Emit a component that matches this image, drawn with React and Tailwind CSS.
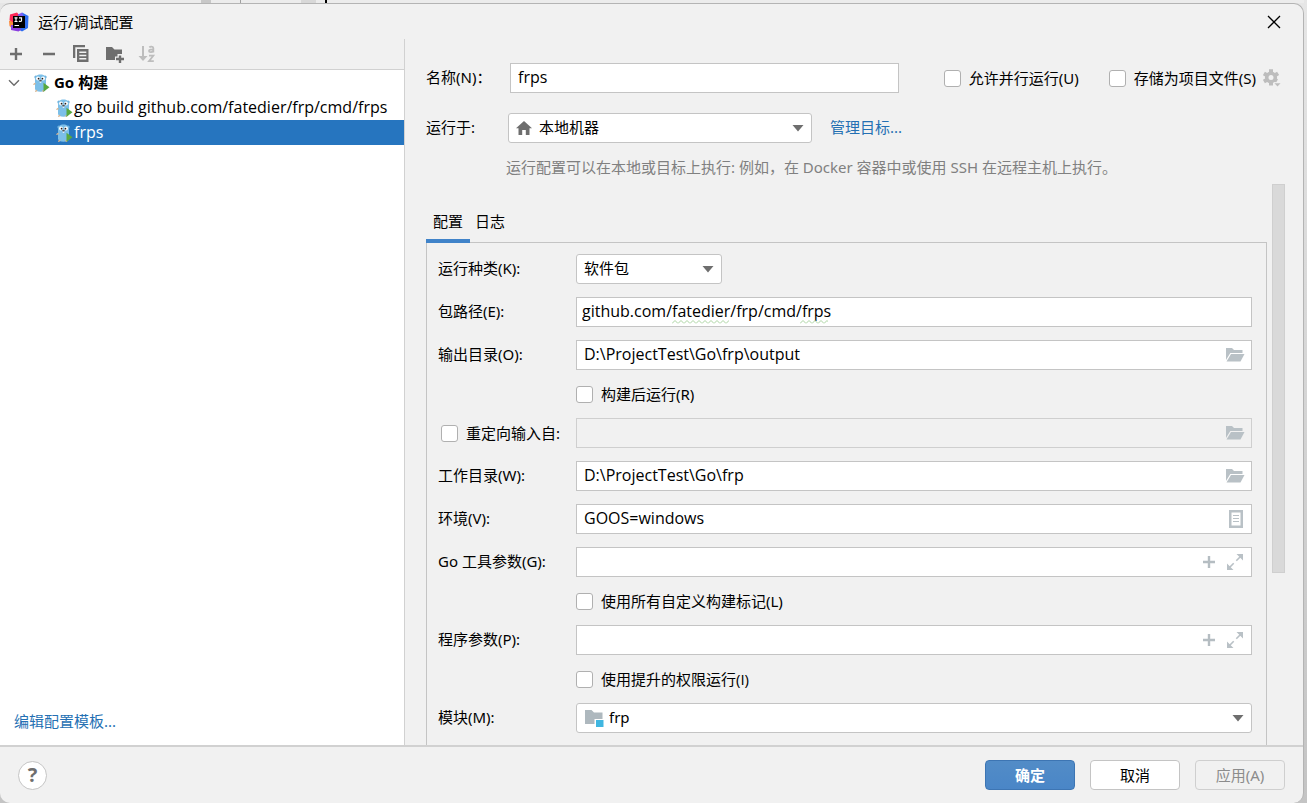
import React, { useState } from 'react';

const PlusIcon = ({ className }) => (
    <svg className={className} width="14" height="14" viewBox="0 0 14 14" fill="currentColor" aria-hidden="true">
        <path d="M5.8 1h2.4v4.8H13v2.4H8.200V13H5.800V8.200H1V5.800h4.800z" />
    </svg>
);

const MinusIcon = () => (
    <svg width="14" height="14" viewBox="0 0 14 14" fill="currentColor" aria-hidden="true">
        <path d="M1 5.800h12v2.400H1z" />
    </svg>
);

const CopyIcon = () => (
    <svg width="18" height="18" viewBox="0 0 18 18" fill="currentColor" aria-hidden="true">
        <path d="M1 0h12v2.300H3.300V13H1z" />
        <path fillRule="evenodd" d="M5 4h11.500v13H5zM7.300 6.500v1.500h7V6.500zM7.300 9.700v1.500h7V9.700zM7.300 13v1.500h7V13z" />
    </svg>
);

const NewFolderIcon = () => (
    <svg width="20" height="18" viewBox="0 0 20 18" fill="currentColor" aria-hidden="true">
        <path d="M1 2h6l2.500 2.500H17V9h-4.500v2.500H10V15H1z" />
        <path d="M13.800 10.500h2.400v2.300h2.800v2.400h-2.800V18h-2.400v-2.800H11v-2.400h2.800z" />
    </svg>
);

const SortIcon = () => (
    <svg width="18" height="18" viewBox="0 0 18 18" fill="none" stroke="currentColor" aria-hidden="true">
        <path strokeWidth="2" d="M5 1v12" />
        <path fill="currentColor" stroke="none" d="M.5 11h9L5 16z" />
        <path strokeWidth="1.800" d="M11.300 2.300c1-.9 4-1 4 .7V7.500M15.300 4.500c-2 0-4.300.1-4.300 1.500 0 1.500 3.300 1.500 4.300 0M11 10.700h4.300L11 16.200h4.800" />
    </svg>
);

const IdeaLogo = () => (
    <svg width="20" height="20" viewBox="0 0 20 20" aria-hidden="true">
        <path fill="#fc8a3b" d="M0 9 5 6v9l-2 1.500L.5 14z" />
        <path fill="#fe2857" d="M1 2.500 8 .5 12 5 5 11 .5 8z" />
        <path fill="#7b5cf2" d="M9 2.500 13 .5l4 4-7 4z" />
        <path fill="#2f6ff0" d="M13 .5 19.500 4 19 16l-6 3.500L9 17l6-12z" />
        <path fill="#8a3fe0" d="M2 13h8l2 5-2.500 1.500L2 18z" />
        <path fill="#000" d="M4 4h12v12H4z" />
        <path fill="none" stroke="#fff" strokeWidth="1.200" d="M5.500 5.800h3M7 5.800v3.700M5.500 9.500h3M10 5.800h2.500V8.500c0 .8-.6 1-1.200 1s-1-.3-1.300-.7M5.500 13.500h4.500" />
    </svg>
);

const GopherIcon = () => (
    <svg width="18" height="18" viewBox="0 0 18 18" aria-hidden="true" className="shrink-0">
        <circle cx="2.800" cy="3" r="1.500" fill="#6fb1dc" />
        <circle cx="12.200" cy="3" r="1.500" fill="#6fb1dc" />
        <path fill="#7cbfe8" d="M2 6C2 2.300 4 .5 7.500.5S13 2.300 13 6v8.500c0 2.300-2 3.200-5.500 3.200S2 16.800 2 14.500z" />
        <circle cx="5" cy="4.500" r="1.900" fill="#fff" />
        <circle cx="10" cy="4.500" r="1.900" fill="#fff" />
        <circle cx="5.600" cy="4.700" r=".9" fill="#231f20" />
        <circle cx="9.400" cy="4.700" r=".9" fill="#231f20" />
        <path fill="#fff" d="M6.700 7.300h1.600v1.500H6.700z" />
        <ellipse cx="7.500" cy="6.700" rx="1.300" ry=".8" fill="#5a4a42" />
        <path stroke="#d9b590" strokeWidth="1.400" strokeLinecap="round" d="M1 10.300l1-.7M2.800 17.200l.8-.7M10.500 17.300l-.6-.5" />
        <path fill="#59a83e" d="M10.500 8.800v9l6-4.500z" />
    </svg>
);

const ChevronDown = () => (
    <svg width="12" height="8" viewBox="0 0 12 8" fill="none" stroke="#6e6e6e" strokeWidth="1.500" aria-hidden="true">
        <path d="M1 1.200 6 6.200 11 1.200" />
    </svg>
);

const HomeIcon = () => (
    <svg width="16" height="14" viewBox="0 0 16 14" fill="#6e6e6e" aria-hidden="true">
        <path d="M8 0l8 7.200h-2.500V14H9.800V9H6.200v5H2.500V7.200H0z" />
    </svg>
);

const ModuleIcon = () => (
    <svg width="20" height="18" viewBox="0 0 20 18" aria-hidden="true">
        <path fill="#aeb8be" d="M1 1h6.500L10 3.500h8.500V10h-8v5H1z" />
        <path fill="#40b6e0" d="M12 11h7.500v7H12z" />
    </svg>
);

const OpenFolderIcon = () => (
    <svg width="20" height="14" viewBox="0 0 20 14" fill="#b9c1c6" aria-hidden="true">
        <path d="M1 0h6l2 2h8.500v3H5.300L1 12z" />
        <path d="M6 6h13.500l-4 7.500H1.500z" />
    </svg>
);

const ListIcon = () => (
    <svg width="16" height="18" viewBox="0 0 16 18" fill="#b9c1c6" aria-hidden="true">
        <path fillRule="evenodd" d="M0 0h14v18H0zM2.500 2.500v13h9v-13z" />
        <path d="M4 5h6v1H4zM4 8h6v1H4zM4 11h6v1H4z" />
    </svg>
);

const ExpandIcon = () => (
    <svg width="18" height="16" viewBox="0 0 18 16" aria-hidden="true">
        <path fill="#b9c1c6" d="M9.500 0H16v6.500zM0 9.500V16h6.500z" />
        <path stroke="#b9c1c6" strokeWidth="1.600" d="M14 2 9.300 6.700M2 14l4.700-4.700" />
    </svg>
);

const GearIcon = () => (
    <svg width="18" height="18" viewBox="0 0 18 18" aria-hidden="true">
        <circle cx="8" cy="8.500" r="4.300" fill="none" stroke="#bdbdbd" strokeWidth="3.600" />
        <path stroke="#bdbdbd" strokeWidth="4" d="M8 .3v3.200M8 13.300v3.200M.9 4.400l2.700 1.600M12.200 10.900l1.800 1M.9 12.600l2.700-1.600M15.100 4.400L12.400 6" />
        <path fill="#f1f1f1" d="M10.500 13.300h8V18h-8z" />
        <path fill="#bdbdbd" d="M11.500 14.300h6l-3 3.300z" />
    </svg>
);

const Arrow = () => (
    <svg width="12" height="7" viewBox="0 0 12 7" fill="#6e6e6e" aria-hidden="true">
        <path d="M.5 0h11L6 6.500z" />
    </svg>
);

const Wave = ({ id }) => (
    <svg width="100%" height="4" aria-hidden="true">
        <defs>
            <pattern id={id} width="6" height="4" patternUnits="userSpaceOnUse">
                <path d="M0 3.500 3 .5 6 3.500" fill="none" stroke="#a9d3a0" />
            </pattern>
        </defs>
        <rect width="100%" height="4" fill={`url(#${id})`} />
    </svg>
);

const Check = ({ children }) => (
    <label className="flex items-center gap-2 whitespace-nowrap">
        <input type="checkbox" className="size-[17px] shrink-0 appearance-none rounded-[3px] border border-[#b0b0b0] bg-white checked:bg-[#4083c9]" />
        {children}
    </label>
);

const Dropdown = ({ id, value, icon, className, selectClass }) => (
    <div className={`relative h-[30px] ${className}`}>
        <select id={id} className={`h-full w-full appearance-none rounded-[3px] border border-[#c4c4c4] bg-white pb-0.5 ${selectClass}`}>
            <option>{value}</option>
        </select>
        {icon && <span className="pointer-events-none absolute inset-y-0 left-2 flex items-center">{icon}</span>}
        <span className="pointer-events-none absolute inset-y-0 right-2 flex items-center"><Arrow /></span>
    </div>
);

const Row = ({ id, label, children }) => (
    <div className="flex h-[30px] items-center">
        <label htmlFor={id} className="w-[138px] shrink-0 pb-0.5">{label}</label>
        {children}
    </div>
);

const Field = ({ id, value = '', disabled, buttons, pad = 'px-[7px]', children }) => (
    <div className="relative h-[30px] flex-1">
        <input
            id={id}
            type="text"
            defaultValue={value}
            disabled={disabled}
            className={`h-full w-full border border-[#c4c4c4] bg-white pb-0.5 font-['Open_Sans','Noto_Sans_CJK_SC',sans-serif] text-base disabled:border-[#cfcfcf] disabled:bg-[#f1f1f1] ${pad}`}
        />
        {children}
        {buttons && <span className="absolute inset-y-0 right-[7px] flex items-center gap-[11px] text-[#b5bdc2]">{buttons}</span>}
    </div>
);

const IconButton = ({ label, disabled, children }) => (
    <button type="button" aria-label={label} disabled={disabled} className="flex items-center">{children}</button>
);

const browse = <IconButton label="浏览"><OpenFolderIcon /></IconButton>;
const macro = (
    <>
        <IconButton label="插入宏"><PlusIcon /></IconButton>
        <IconButton label="展开"><ExpandIcon /></IconButton>
    </>
);

const configs = ['go build github.com/fatedier/frp/cmd/frps', 'frps'];

const Sidebar = () => {
    const [selected, setSelected] = useState('frps');

    return (
        <aside className="flex w-[405px] shrink-0 flex-col border-r border-[#d1d1d1]">
            <div className="flex h-[31px] shrink-0 items-center border-b border-[#d1d1d1] pl-[9px] text-[#6e6e6e]">
                <div className="w-[33px]"><IconButton label="添加"><PlusIcon /></IconButton></div>
                <div className="w-[30px]"><IconButton label="移除"><MinusIcon /></IconButton></div>
                <div className="w-[33px]"><IconButton label="复制"><CopyIcon /></IconButton></div>
                <div className="w-[33px]"><IconButton label="新建文件夹"><NewFolderIcon /></IconButton></div>
                <div className="text-[#bdbdbd]"><IconButton label="排序" disabled><SortIcon /></IconButton></div>
            </div>
            <div className="flex flex-1 flex-col bg-white">
                <div className="flex h-[25px] items-center pl-2 font-bold">
                    <span className="w-[25px]"><ChevronDown /></span>
                    <GopherIcon />
                    <span className="ml-[3px] pb-0.5">Go 构建</span>
                </div>
                {configs.map(name => (
                    <button
                        key={name}
                        type="button"
                        onClick={() => setSelected(name)}
                        className={`flex h-[25px] items-center whitespace-nowrap pl-14 font-['Open_Sans','Noto_Sans_CJK_SC',sans-serif] text-base ${selected === name ? 'bg-[#2675bf] text-white' : ''}`}
                    >
                        <GopherIcon />
                        <span className="pb-0.5">{name}</span>
                    </button>
                ))}
                <a href="#templates" className="mt-auto mb-3.5 ml-3.5 self-start text-[#2470b3]">编辑配置模板...</a>
            </div>
        </aside>
    );
};

const ConfigTab = () => (
    <div className="flex flex-1 flex-col gap-[13px] border-x border-t border-[#c4c4c4] pt-[11px] pr-[14px] pl-[11px]">
        <Row id="kind" label="运行种类(K):">
            <Dropdown id="kind" value="软件包" className="w-[146px]" selectClass="pl-[7px]" />
        </Row>
        <Row id="package" label="包路径(E):">
            <Field id="package" value="github.com/fatedier/frp/cmd/frps" pad="px-[5px]">
                <span className="absolute bottom-[3px] left-[96px] flex w-[57px]"><Wave id="w1" /></span>
                <span className="absolute bottom-[3px] left-[224px] flex w-[28px]"><Wave id="w2" /></span>
            </Field>
        </Row>
        <Row id="output" label="输出目录(O):">
            <Field id="output" value="D:\ProjectTest\Go\frp\output" buttons={browse} />
        </Row>
        <div className="flex h-[22px] items-center pl-[138px]"><Check>构建后运行(R)</Check></div>
        <div className="flex h-[30px] items-center">
            <div className="w-[138px] shrink-0 pl-[3px]"><Check>重定向输入自:</Check></div>
            <Field id="redirect" disabled buttons={browse} />
        </div>
        <Row id="workdir" label="工作目录(W):">
            <Field id="workdir" value="D:\ProjectTest\Go\frp" buttons={browse} />
        </Row>
        <Row id="env" label="环境(V):">
            <Field id="env" value="GOOS=windows" buttons={<IconButton label="编辑环境变量"><ListIcon /></IconButton>} />
        </Row>
        <Row id="goargs" label="Go 工具参数(G):">
            <Field id="goargs" buttons={macro} />
        </Row>
        <div className="flex h-[22px] items-center pl-[138px]"><Check>使用所有自定义构建标记(L)</Check></div>
        <Row id="args" label="程序参数(P):">
            <Field id="args" buttons={macro} />
        </Row>
        <div className="flex h-[22px] items-center pl-[138px] font-['Open_Sans','Noto_Sans_CJK_SC',sans-serif]"><Check>使用提升的权限运行(I)</Check></div>
        <Row id="module" label="模块(M):">
            <Dropdown id="module" value="frp" icon={<ModuleIcon />} className="flex-1" selectClass="pl-8" />
        </Row>
    </div>
);

export default function App() {
    return (
        <div className="flex h-screen flex-col overflow-hidden bg-linear-to-b from-[#e6e6e6] to-[#c4c4c4] pr-[3px] font-['Noto_Sans','Noto_Sans_CJK_SC',sans-serif] text-[15px] leading-5 text-black">
            {/* Sliver of the editor window behind the dialog */}
            <div className="flex h-[3px] shrink-0 bg-[#ececec]">
                <div className="ml-[201px] w-[10px] bg-[#c8c8c8]" />
                <div className="ml-[29px] w-px bg-[#a0a0a0]" />
                <div className="ml-[60px] w-[15px] bg-[#d8d8d8]" />
                <div className="ml-[9px] w-[2px] bg-black" />
            </div>

            <div className="flex min-h-0 flex-1 flex-col overflow-hidden rounded-[10px] border-t border-r border-[#b4b4b4] bg-[#f1f1f1]">
                <header className="flex h-[35px] shrink-0 items-center pr-[22px] pl-[9px]">
                    <IdeaLogo />
                    <h1 className="ml-[9px]">运行/调试配置</h1>
                    <button type="button" aria-label="关闭" className="ml-auto">
                        <svg width="14" height="14" viewBox="0 0 14 14" stroke="#000" strokeWidth="1.300" aria-hidden="true">
                            <path d="M1 1l12 12M13 1L1 13" />
                        </svg>
                    </button>
                </header>

                <div className="flex min-h-0 flex-1">
                    <Sidebar />

                    <main className="flex min-w-0 flex-1 flex-col pt-6 pl-[21px]">
                        <div className="flex h-[30px] shrink-0 items-center pr-[22px]">
                            <label htmlFor="name" className="w-[84px] shrink-0 pb-0.5">名称(N)：</label>
                            <input id="name" type="text" defaultValue="frps" className="h-full min-w-0 flex-1 border border-[#c4c4c4] bg-white px-[7px] pb-0.5 font-['Open_Sans','Noto_Sans_CJK_SC',sans-serif] text-base" />
                            <div className="ml-[45px]"><Check>允许并行运行(U)</Check></div>
                            <div className="ml-[30px]"><Check>存储为项目文件(S)</Check></div>
                            <div className="ml-[7px]"><IconButton label="存储选项"><GearIcon /></IconButton></div>
                        </div>
                        <div className="mt-5 flex h-[30px] shrink-0 items-center">
                            <label htmlFor="target" className="w-[82px] shrink-0 pb-0.5">运行于:</label>
                            <Dropdown id="target" value="本地机器" icon={<HomeIcon />} className="w-[304px]" selectClass="pl-[30px]" />
                            <a href="#targets" className="ml-[18px] pb-0.5 text-[#2470b3]">管理目标...</a>
                        </div>
                        <p className="mt-[14px] shrink-0 pl-20 text-[#808080]">运行配置可以在本地或目标上执行: 例如，在 Docker 容器中或使用 SSH 在远程主机上执行。</p>

                        <div className="mt-[7px] flex min-h-0 flex-1">
                            <div className="flex min-w-0 flex-1 flex-col overflow-hidden">
                                <div role="tablist" className="flex h-[58px] shrink-0 items-end">
                                    <button type="button" role="tab" aria-selected="true" className="relative px-[7px] pb-[11px]">
                                        配置
                                        <span className="absolute inset-x-0 -bottom-px z-10 h-1 bg-[#4083c9]" />
                                    </button>
                                    <button type="button" role="tab" aria-selected="false" className="px-[5px] pb-[11px]">日志</button>
                                </div>
                                <ConfigTab />
                            </div>
                            <div className="mr-[18px] ml-[5px] w-[13px]">
                                <div className="h-[389px] border border-[#cfcfcf] bg-[#d9d9d9]" />
                            </div>
                        </div>
                    </main>
                </div>

                <footer className="flex h-[58px] shrink-0 items-center gap-[15px] border-t-2 border-[#d1d1d1] pr-[18px] pl-[18px]">
                    <button type="button" aria-label="帮助" className="mr-auto flex size-[29px] items-center justify-center rounded-full border border-[#c4c4c4] bg-white text-xl font-bold text-[#6e6e6e]">?</button>
                    <button type="button" className="h-[30px] w-[90px] rounded-[4px] border border-[#3d75b3] bg-linear-to-b from-[#528cc7] to-[#4a86c7] font-bold text-white">确定</button>
                    <button type="button" className="h-[30px] w-[90px] rounded-[4px] border border-[#c4c4c4] bg-white">取消</button>
                    <button type="button" disabled className="h-[30px] w-[90px] rounded-[4px] border border-[#cfcfcf] text-[#8c8c8c]">应用(A)</button>
                </footer>
            </div>
        </div>
    );
}
